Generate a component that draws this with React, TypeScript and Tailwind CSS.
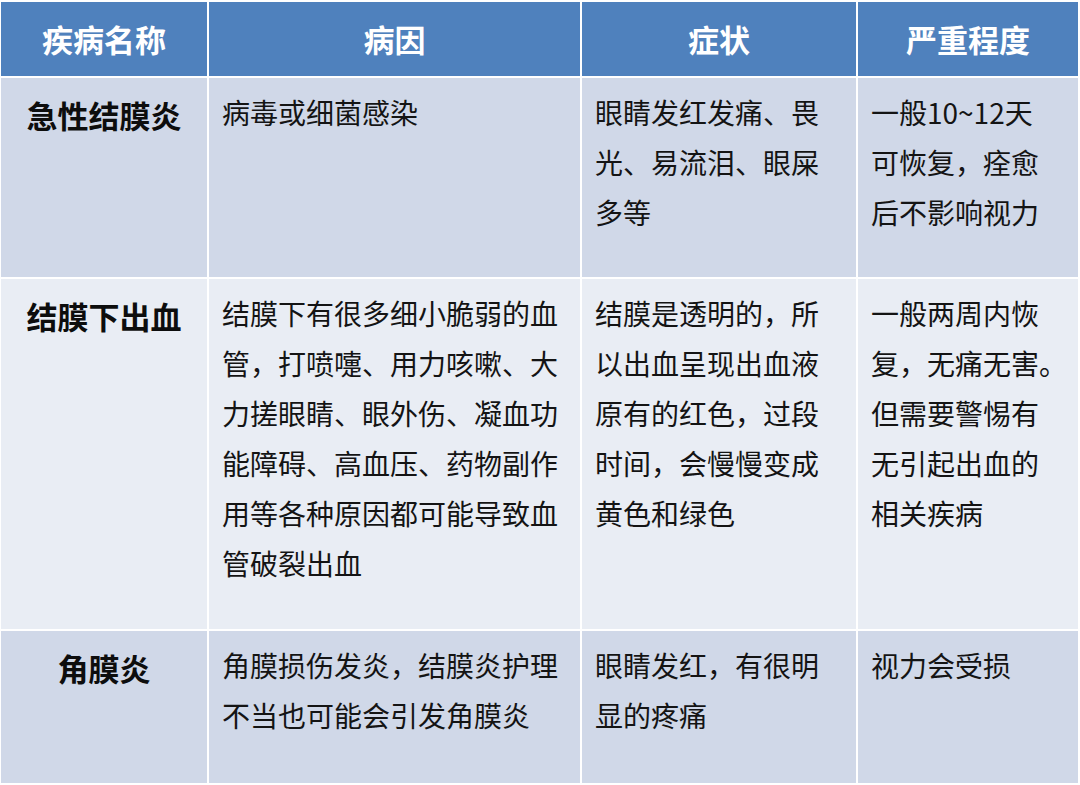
const headers = ['疾病名称', '病因', '症状', '严重程度'];

const rows = [
  {
    name: '急性结膜炎',
    bg: 'bg-[#d0d8e8]',
    cells: [
      ['病毒或细菌感染'],
      ['眼睛发红发痛、畏', '光、易流泪、眼屎', '多等'],
      ['一般10~12天', '可恢复，痊愈', '后不影响视力'],
    ],
  },
  {
    name: '结膜下出血',
    bg: 'bg-[#e9edf4]',
    cells: [
      [
        '结膜下有很多细小脆弱的血',
        '管，打喷嚏、用力咳嗽、大',
        '力搓眼睛、眼外伤、凝血功',
        '能障碍、高血压、药物副作',
        '用等各种原因都可能导致血',
        '管破裂出血',
      ],
      ['结膜是透明的，所', '以出血呈现出血液', '原有的红色，过段', '时间，会慢慢变成', '黄色和绿色'],
      ['一般两周内恢', '复，无痛无害。', '但需要警惕有', '无引起出血的', '相关疾病'],
    ],
  },
  {
    name: '角膜炎',
    bg: 'bg-[#d0d8e8]',
    cells: [
      ['角膜损伤发炎，结膜炎护理', '不当也可能会引发角膜炎'],
      ['眼睛发红，有很明', '显的疼痛'],
      ['视力会受损'],
    ],
  },
];

export default function App() {
  return (
    <div
      className="w-[1080px] h-[785px] bg-white p-[2px] pl-[1px] grid grid-cols-[206px_371px_274px_220px] grid-rows-[74px_199px_350px_152px] gap-[2px] overflow-hidden"
      style={{ fontFamily: '"Noto Sans CJK SC", "Noto Sans", sans-serif' }}
    >
      {headers.map((h) => (
        <div
          key={h}
          className="bg-[#4f81bd] flex items-center justify-center text-white font-bold text-[31px]"
        >
          {h}
        </div>
      ))}
      {rows.map((r) => (
        <>
          <div
            key={r.name}
            className={`${r.bg} text-center font-bold text-[31px] leading-[50px] pt-[12px] text-[#0d0d0d]`}
          >
            {r.name}
          </div>
          {r.cells.map((lines, i) => (
            <div
              key={r.name + i}
              className={`${r.bg} pl-[13px] pt-[9px] text-[28px] leading-[50px] text-[#141414]`}
            >
              {lines.map((l) => (
                <div key={l} className="whitespace-nowrap">
                  {l}
                </div>
              ))}
            </div>
          ))}
        </>
      ))}
    </div>
  );
}
